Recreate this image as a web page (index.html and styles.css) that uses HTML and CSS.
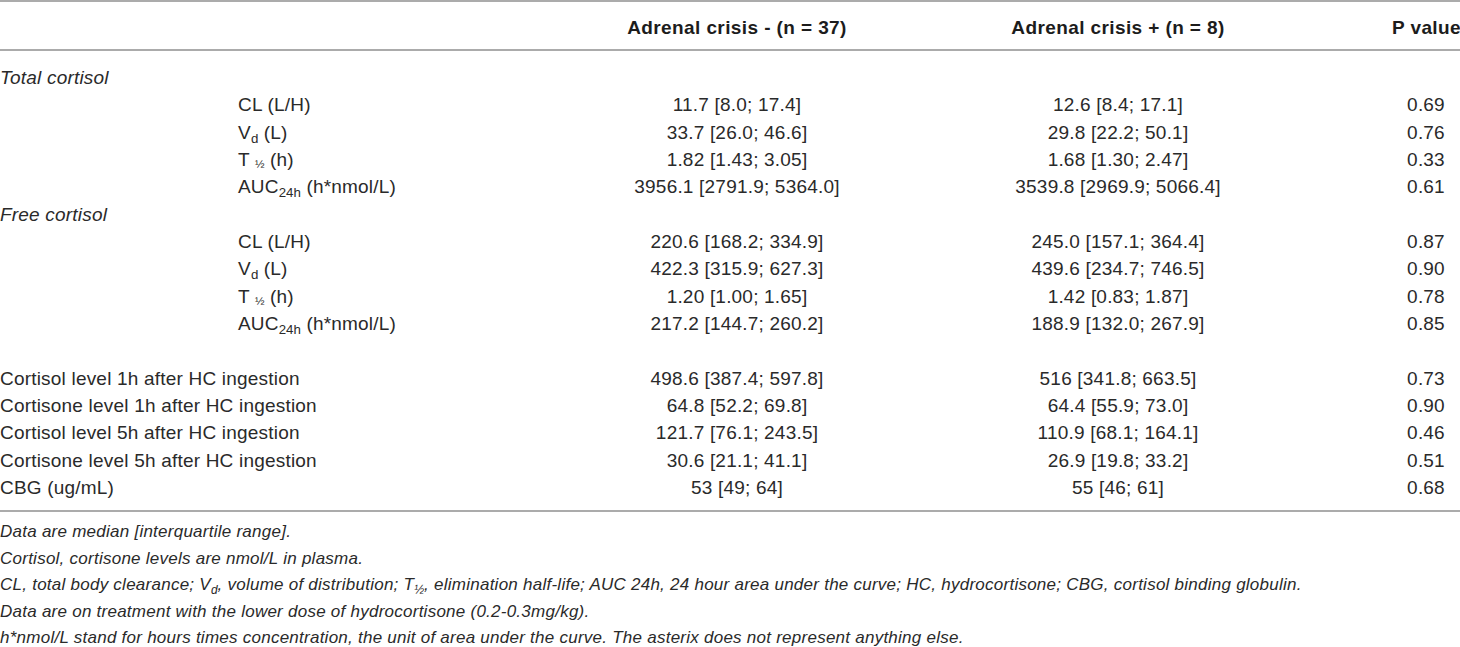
FILE: index.html
```html
<!DOCTYPE html>
<html lang="en">
<head>
  <meta charset="UTF-8" />
  <meta name="viewport" content="width=device-width, initial-scale=1.0"/>
  <title>Cortisol pharmacokinetics by adrenal crisis</title>
  <link rel="stylesheet" href="styles.css">
</head>
<body>

  <table class="pk-table">
    <colgroup>
      <col class="col-label">
      <col class="col-neg">
      <col class="col-pos">
      <col class="col-p">
    </colgroup>
    <thead>
      <tr>
        <th></th>
        <th>Adrenal crisis - (n = 37)</th>
        <th>Adrenal crisis + (n = 8)</th>
        <th class="p">P value</th>
      </tr>
    </thead>
    <tbody>
      <tr><td class="group">Total cortisol</td><td></td><td></td><td class="p"></td></tr>
      <tr><td class="sub">CL (L/H)</td><td>11.7 [8.0; 17.4]</td><td>12.6 [8.4; 17.1]</td><td class="p">0.69</td></tr>
      <tr><td class="sub">V<sub>d</sub> (L)</td><td>33.7 [26.0; 46.6]</td><td>29.8 [22.2; 50.1]</td><td class="p">0.76</td></tr>
      <tr><td class="sub">T <sub class="half">½</sub> (h)</td><td>1.82 [1.43; 3.05]</td><td>1.68 [1.30; 2.47]</td><td class="p">0.33</td></tr>
      <tr><td class="sub">AUC<sub>24h</sub> (h*nmol/L)</td><td>3956.1 [2791.9; 5364.0]</td><td>3539.8 [2969.9; 5066.4]</td><td class="p">0.61</td></tr>
      <tr><td class="group">Free cortisol</td><td></td><td></td><td class="p"></td></tr>
      <tr><td class="sub">CL (L/H)</td><td>220.6 [168.2; 334.9]</td><td>245.0 [157.1; 364.4]</td><td class="p">0.87</td></tr>
      <tr><td class="sub">V<sub>d</sub> (L)</td><td>422.3 [315.9; 627.3]</td><td>439.6 [234.7; 746.5]</td><td class="p">0.90</td></tr>
      <tr><td class="sub">T <sub class="half">½</sub> (h)</td><td>1.20 [1.00; 1.65]</td><td>1.42 [0.83; 1.87]</td><td class="p">0.78</td></tr>
      <tr><td class="sub">AUC<sub>24h</sub> (h*nmol/L)</td><td>217.2 [144.7; 260.2]</td><td>188.9 [132.0; 267.9]</td><td class="p">0.85</td></tr>
      <tr><td>&nbsp;</td><td></td><td></td><td class="p"></td></tr>
      <tr><td>Cortisol level 1h after HC ingestion</td><td>498.6 [387.4; 597.8]</td><td>516 [341.8; 663.5]</td><td class="p">0.73</td></tr>
      <tr><td>Cortisone level 1h after HC ingestion</td><td>64.8 [52.2; 69.8]</td><td>64.4 [55.9; 73.0]</td><td class="p">0.90</td></tr>
      <tr><td>Cortisol level 5h after HC ingestion</td><td>121.7 [76.1; 243.5]</td><td>110.9 [68.1; 164.1]</td><td class="p">0.46</td></tr>
      <tr><td>Cortisone level 5h after HC ingestion</td><td>30.6 [21.1; 41.1]</td><td>26.9 [19.8; 33.2]</td><td class="p">0.51</td></tr>
      <tr><td>CBG (ug/mL)</td><td>53 [49; 64]</td><td>55 [46; 61]</td><td class="p">0.68</td></tr>
    </tbody>
  </table>

  <div class="notes">
    <p>Data are median [interquartile range].</p>
    <p>Cortisol, cortisone levels are nmol/L in plasma.</p>
    <p>CL, total body clearance; V<sub>d</sub>, volume of distribution; T<sub>½</sub>, elimination half-life; AUC 24h, 24 hour area under the curve; HC, hydrocortisone; CBG, cortisol binding globulin.</p>
    <p>Data are on treatment with the lower dose of hydrocortisone (0.2-0.3mg/kg).</p>
    <p>h*nmol/L stand for hours times concentration, the unit of area under the curve. The asterix does not represent anything else.</p>
  </div>

</body>
</html>
```

FILE: styles.css
```css
body {
  margin: 0;
  background: #fff;
  color: #2a2a2a;
  font-family: "Liberation Sans", Arial, sans-serif;
}
.pk-table {
  width: 1460px;
  border-collapse: collapse;
  table-layout: fixed;
  font-size: 19px;
  letter-spacing: 0.2px;
}
.col-label { width: 530px; }
.col-neg { width: 414px; }
.col-pos { width: 348px; }
.col-p { width: 168px; }
.pk-table thead tr {
  border-top: 2px solid #ababab;
  border-bottom: 2px solid #ababab;
}
.pk-table th {
  padding: 15px 0 11px;
  line-height: 21px;
  font-weight: bold;
  color: #1c1c1c;
  letter-spacing: 0.4px;
  text-align: center;
  white-space: nowrap;
}
.pk-table tbody {
  border-bottom: 2px solid #ababab;
}
.pk-table td {
  padding: 0;
  line-height: 27.33px;
  text-align: center;
  white-space: nowrap;
}
.pk-table tbody tr:first-child td {
  padding-top: 13px;
}
.pk-table tbody tr:last-child td {
  padding-bottom: 9px;
}
.pk-table td:first-child {
  text-align: left;
}
.pk-table td.sub {
  padding-left: 238px;
}
.pk-table td.group {
  font-style: italic;
}
.pk-table .p {
  padding-left: 100px;
}
sub {
  font-size: 0.7em;
  line-height: 0;
  vertical-align: -0.3em;
  letter-spacing: 0;
}
sub.half {
  font-size: 0.6em;
  vertical-align: -0.2em;
}
.notes {
  padding-top: 7px;
  font-size: 17px;
  font-style: italic;
  letter-spacing: 0.25px;
}
.notes p {
  margin: 0;
  line-height: 26.5px;
}
```
